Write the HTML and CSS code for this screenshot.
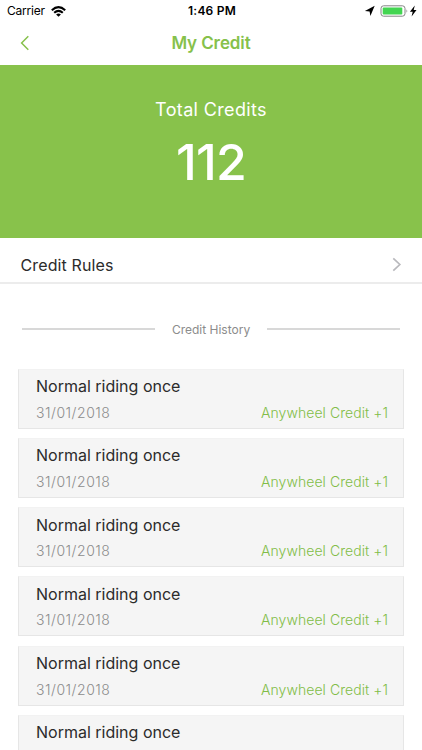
FILE: index.html
```
<!DOCTYPE html>
<html lang="en">
<head>
<meta charset="utf-8">
<title>My Credit</title>
<link rel="stylesheet" href="styles.css">
</head>
<body>
<header>
  <div class="status">
    <div class="left"><span class="carrier">Carrier</span>
      <svg width="15" height="11" viewBox="0 0 15 11"><g fill="none" stroke="#000" stroke-width="2.1"><path d="M.8 4.2Q7.5-1.8 14.2 4.2"/><path d="M3.2 6.8Q7.5 3 11.8 6.8"/></g><path d="M5.1 8.4Q7.5 6.4 9.9 8.4L7.5 10.8Z"/></svg>
    </div>
    <span class="time">1:46 PM</span>
    <div class="right">
      <svg width="53" height="14" viewBox="0 0 53 14"><path d="M10.7 1.8 6.4 12 5.6 7.5 0.9 7.1Z"/><rect x="17" y="1.8" width="24" height="10.4" rx="2.6" fill="#fff" stroke="#858585"/><rect x="18.7" y="3.5" width="19.6" height="7" rx="1" fill="#43d551"/><path d="M42.5 5.2Q44.2 7 42.5 8.8Z" fill="#858585"/><path d="M50.8 1.4 45.9 7.8h2.8l-1.1 4.8 4.9-6.7h-2.8Z"/></svg>
    </div>
  </div>
  <nav class="nav">
    <svg class="back" width="10" height="16" viewBox="0 0 10 16"><path d="M8.3 1.2 1.6 8l6.7 6.8" fill="none" stroke="#86c14b" stroke-width="1.5"/></svg>
    <h1>My Credit</h1>
  </nav>
</header>
<section class="total">
  <div class="label">Total Credits</div>
  <div class="value">112</div>
</section>
<a class="rules"><span>Credit Rules</span>
  <svg width="10" height="15" viewBox="0 0 10 15"><path d="M1.3 1.3 7.8 7.5 1.3 13.7" fill="none" stroke="#b9b9bd" stroke-width="1.7"/></svg>
</a>
<div class="divider"><span>Credit History</span></div>
<main class="list">
  <article><h2>Normal riding once</h2><div class="meta"><time>31/01/2018</time><span class="gain">Anywheel Credit +1</span></div></article>
  <article><h2>Normal riding once</h2><div class="meta"><time>31/01/2018</time><span class="gain">Anywheel Credit +1</span></div></article>
  <article><h2>Normal riding once</h2><div class="meta"><time>31/01/2018</time><span class="gain">Anywheel Credit +1</span></div></article>
  <article><h2>Normal riding once</h2><div class="meta"><time>31/01/2018</time><span class="gain">Anywheel Credit +1</span></div></article>
  <article><h2>Normal riding once</h2><div class="meta"><time>31/01/2018</time><span class="gain">Anywheel Credit +1</span></div></article>
  <article><h2>Normal riding once</h2></article>
</main>
</body>
</html>
```
FILE: styles.css
```
* { box-sizing: border-box; }
body { margin: 0; height: 750px; overflow: hidden; background: #fff; color: #2b2b2b; font-family: Inter, "Liberation Sans", sans-serif; white-space: nowrap; }
svg { display: block; flex: none; }
h1, h2 { margin: 0; }
header { height: 65px; }
.status { height: 22px; display: grid; grid-template-columns: 1fr auto 1fr; align-items: center; padding: 0 5px 0 7px; color: #000; }
.left { display: flex; align-items: center; gap: 6px; }
.carrier { font-size: 12px; line-height: 22px; letter-spacing: -0.2px; }
.time { font-size: 12px; font-weight: 600; line-height: 22px; letter-spacing: 0.2px; }
.right { display: flex; justify-content: flex-end; }
.nav { height: 43px; display: grid; grid-template-columns: 1fr auto 1fr; align-items: center; padding: 0 20px; }
.back { margin-top: -1px; }
h1 { font-size: 17px; line-height: 43px; font-weight: 600; letter-spacing: -0.1px; color: #86c14b; grid-column: 2; }
.total { height: 173px; padding-top: 32px; background: #88c24b; color: #fff; text-align: center; }
.label { font-size: 18px; line-height: 26px; letter-spacing: 0.35px; }
.value { font-size: 50px; font-weight: 450; line-height: 60px; margin-top: 9px; letter-spacing: -0.8px; }
.rules { height: 46px; border-bottom: 2px solid #ececec; display: flex; align-items: center; justify-content: space-between; padding: 9px 20px 0 20.5px; font-size: 16px; line-height: 33px; letter-spacing: 0.12px; }
.rules span { padding-top: 1px; }
.rules svg { margin-top: -1px; }
.divider { height: 24px; margin: 33px 22px 27.5px; display: flex; align-items: center; gap: 17px; font-size: 12px; color: #8c8c8c; }
.divider::before, .divider::after { content: ""; flex: 1; height: 2px; background: #d8d8d8; }
.list { padding: 0 18px; display: grid; gap: 9.25px; }
article { height: 60px; padding: 5.5px 15px 0 17px; background: #f5f5f5; border: 1px solid #e6e6e6; border-top-color: #f2f2f2; }
h2 { font-size: 16px; font-weight: 400; line-height: 22px; }
.meta { display: flex; justify-content: space-between; font-size: 14px; line-height: 20px; margin-top: 5.5px; }
time { color: #8c8c8c; font-weight: 350; letter-spacing: 0.52px; }
.gain { color: #82bd47; font-weight: 350; letter-spacing: 0.06px; }
```
